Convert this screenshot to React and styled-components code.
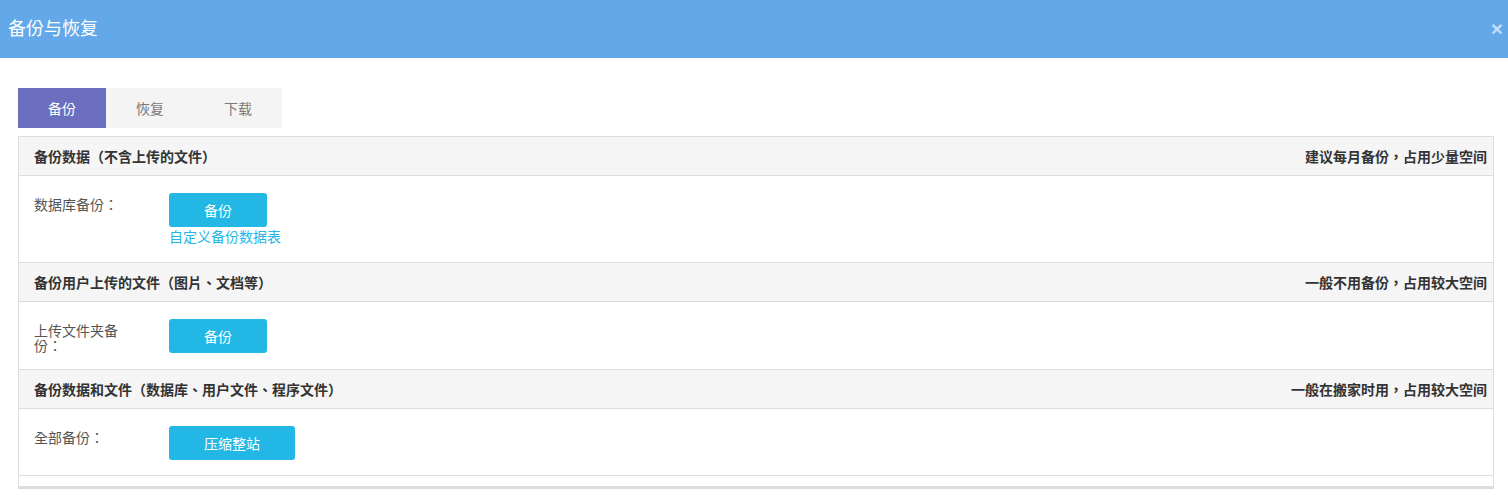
import React from "react";
import styled, { createGlobalStyle } from "styled-components";

const Global = createGlobalStyle`
  html, body { margin: 0; padding: 0; background: #fff; }
  body {
    font-family: "Liberation Sans", "Noto Sans CJK TC", "Noto Sans CJK SC", sans-serif;
    font-size: 14px;
    color: #555;
    text-spacing-trim: space-all;
  }
  * { box-sizing: border-box; }
`;

const Header = styled.div`
  height: 58px;
  background: #63a8e9;
  display: flex;
  align-items: center;
  justify-content: space-between;
  padding: 0 5px 0 8px;
`;

const Title = styled.h1`
  margin: 0;
  font-size: 18px;
  font-weight: normal;
  color: #fff;
  line-height: 1;
`;

const Close = styled.span`
  color: #c4def7;
  font-size: 21px;
  font-weight: bold;
  line-height: 1;
  margin-top: -2px;
`;

const Body = styled.div`
  padding: 30px 14px 0 18px;
`;

const Tabs = styled.div`
  display: flex;
  margin-bottom: 8px;
`;

const Tab = styled.div`
  width: 88px;
  height: 40px;
  display: flex;
  align-items: center;
  justify-content: center;
  font-size: 14px;
  background: ${(p) => (p.$active ? "#6c6fbf" : "#f4f4f4")};
  color: ${(p) => (p.$active ? "#fff" : "#7a7a7a")};
`;

const Panel = styled.div`
  border: 1px solid #ddd;
  border-bottom: 3px solid #ddd;
`;

const SectionHead = styled.div`
  height: 39px;
  background: #f5f5f5;
  border-bottom: 1px solid #ddd;
  display: flex;
  align-items: center;
  justify-content: space-between;
  padding: 0 6px 0 15px;
  font-size: 14px;
  font-weight: bold;
  color: #333;
`;

const Row = styled.div`
  display: flex;
  align-items: flex-start;
  padding: 17px 15px 15px 15px;
  border-bottom: 1px solid #ddd;
`;

const Label = styled.div`
  width: 100px;
  margin-right: 35px;
  padding-top: 5px;
  line-height: 15px;
  color: #555;
`;

const Actions = styled.div`
  display: flex;
  flex-direction: column;
  align-items: flex-start;
`;

const Button = styled.button`
  height: 34px;
  padding: 0 35px;
  border: none;
  border-radius: 3px;
  background: #23b7e5;
  color: #fff;
  font-family: inherit;
  font-size: 14px;
  cursor: pointer;
`;

const Link = styled.a`
  color: #23b7e5;
  text-decoration: none;
  line-height: 20px;
  font-size: 14px;
`;

const Spacer = styled.div`
  height: 10px;
`;

const sections = [
  {
    title: "备份数据（不含上传的文件）",
    note: "建议每月备份，占用少量空间",
    label: "数据库备份：",
    button: "备份",
    link: "自定义备份数据表",
  },
  {
    title: "备份用户上传的文件（图片、文档等）",
    note: "一般不用备份，占用较大空间",
    label: "上传文件夹备份：",
    button: "备份",
  },
  {
    title: "备份数据和文件（数据库、用户文件、程序文件）",
    note: "一般在搬家时用，占用较大空间",
    label: "全部备份：",
    button: "压缩整站",
  },
];

export default function App() {
  return (
    <>
      <Global />
      <Header>
        <Title>备份与恢复</Title>
        <Close>×</Close>
      </Header>
      <Body>
        <Tabs>
          <Tab $active>备份</Tab>
          <Tab>恢复</Tab>
          <Tab>下载</Tab>
        </Tabs>
        <Panel>
          {sections.map((s) => (
            <React.Fragment key={s.title}>
              <SectionHead>
                <span>{s.title}</span>
                <span>{s.note}</span>
              </SectionHead>
              <Row>
                <Label>{s.label}</Label>
                <Actions>
                  <Button>{s.button}</Button>
                  {s.link && <Link href="#">{s.link}</Link>}
                </Actions>
              </Row>
            </React.Fragment>
          ))}
          <Spacer />
        </Panel>
      </Body>
    </>
  );
}
